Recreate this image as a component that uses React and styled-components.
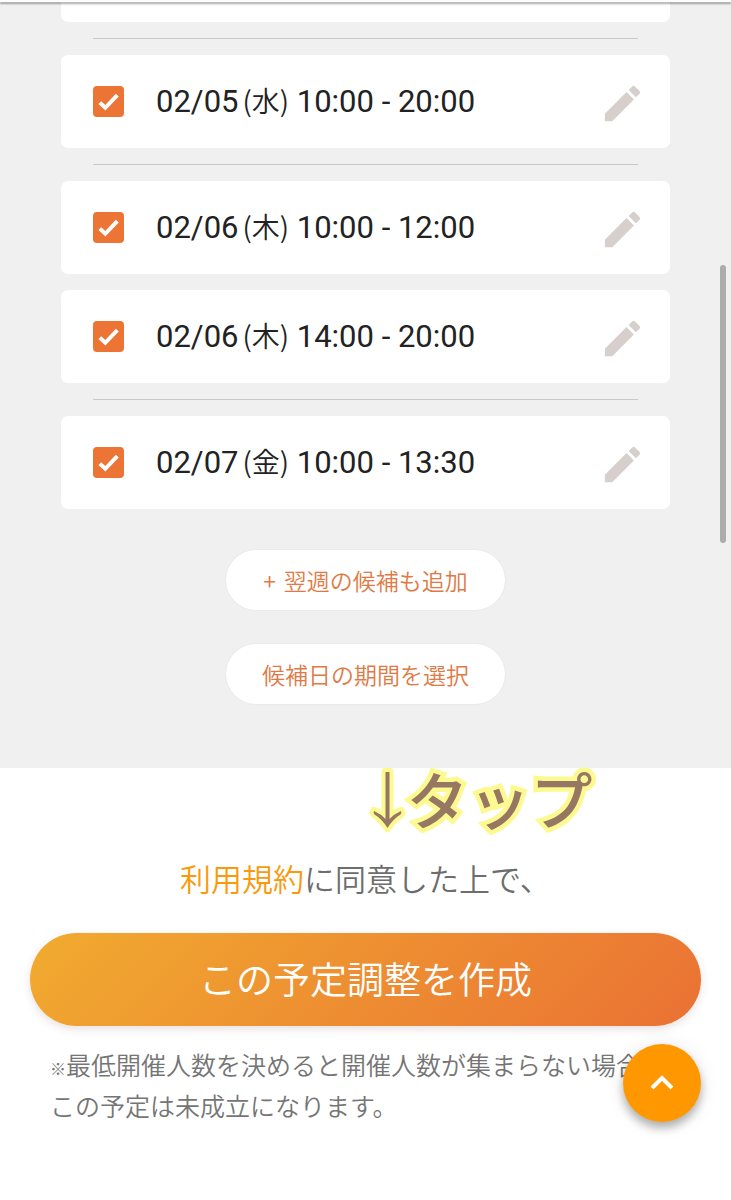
import React, { useState } from "react";
import styled, { createGlobalStyle } from "styled-components";
import { MdEdit } from "react-icons/md";

const GlobalStyle = createGlobalStyle`
  *, *::before, *::after { box-sizing: border-box; }
  body {
    margin: 0;
    background: #fff;
    color: #222;
    font-family: Roboto, "Noto Sans CJK JP", sans-serif;
  }
  button { font-family: inherit; border: 0; cursor: pointer; }
`;

const Page = styled.div`
  min-height: 100vh;
`;

const Header = styled.header`
  position: sticky;
  top: 0;
  z-index: 2;
  height: 2px;
  background: #fdfdfd;
  box-shadow: 0 2px 2px rgba(0, 0, 0, 0.36);
`;

const Candidates = styled.section`
  display: flex;
  flex-direction: column;
  align-items: center;
  gap: 41px;
  padding: 0 61px 64px;
  background: #f0f0f0;
`;

const List = styled.div`
  display: flex;
  flex-direction: column;
  gap: 16px;
  width: 100%;
`;

const CardTail = styled.div`
  height: 20px;
  border-radius: 0 0 7px 7px;
  background: #fff;
`;

const Card = styled.div`
  display: flex;
  align-items: center;
  height: 93px;
  padding: 0 24px 0 32px;
  border-radius: 7px;
  background: #fff;
`;

const Rule = styled.hr`
  height: 1px;
  margin: 0 32px;
  border: 0;
  background: #c9c9c9;
`;

const CheckLabel = styled.label`
  display: flex;
  flex: 1;
  align-items: center;
  gap: 32px;
  cursor: pointer;
`;

const CheckBox = styled.span`
  display: grid;
  width: 31px;
  height: 31px;

  & > * { grid-area: 1 / 1; }
  svg { pointer-events: none; }
  input:not(:checked) + svg { visibility: hidden; }
`;

const CheckInput = styled.input`
  appearance: none;
  width: 31px;
  height: 31px;
  margin: 0;
  border: 2px solid #ec7434;
  border-radius: 4px;
  background: #fff;

  &:checked { background: #ec7434; }
`;

const Slot = styled.span`
  font-size: 31px;
  line-height: 40px;
  white-space: nowrap;
`;

const Weekday = styled.span`
  margin: 0 0 0 4px;
  font-family: "Noto Sans CJK JP", sans-serif;
  font-size: 28px;
  font-weight: 350;
  line-height: 30px;
`;

const EditButton = styled.button`
  display: flex;
  padding: 4px 0 0;
  background: none;
  color: #d6cfcb;
`;

const PillGroup = styled.div`
  display: grid;
  gap: 34px;
`;

const Pill = styled.button`
  display: flex;
  align-items: center;
  justify-content: center;
  gap: 8px;
  height: 60px;
  padding: 0 36px;
  border-radius: 30px;
  background: #fff;
  box-shadow: 0 0 2px rgba(0, 0, 0, 0.08);
  color: #e07a45;
  font-family: "Noto Sans CJK JP", sans-serif;
  font-size: 23px;
  font-weight: 350;
`;

const Submit = styled.section`
  position: relative;
  display: flex;
  flex-direction: column;
  padding: 86px 30px 72px;
  font-family: "Noto Sans CJK JP", sans-serif;
  font-weight: 350;
`;

const TapHint = styled.div`
  position: absolute;
  top: -6px;
  left: calc(50% + 3px);
  display: flex;
  align-items: center;
  color: #957762;
  font-size: 62px;
  font-weight: 500;
  line-height: 72px;
  -webkit-text-stroke: 9px #fdf991;
  paint-order: stroke fill;
  pointer-events: none;
`;

const Terms = styled.p`
  margin: 0 0 31px;
  color: #6d6d6d;
  font-size: 31px;
  line-height: 48px;
  text-align: center;

  a { color: #f89a0c; text-decoration: none; }
`;

const CreateButton = styled.button`
  height: 93px;
  padding: 0 0 4px;
  border-radius: 47px;
  background: linear-gradient(135deg, #f1ab2f 0%, #ea7134 100%);
  box-shadow: 0 3px 8px rgba(120, 60, 60, 0.16);
  color: #fff;
  font-size: 37px;
  font-weight: 350;
`;

const Note = styled.p`
  margin: 18px 0 0;
  padding-left: 20px;
  color: #757575;
  font-size: 25px;
  line-height: 41px;
  white-space: nowrap;
  overflow: hidden;

  small { font-size: 16px; line-height: 16px; }
`;

const TopButton = styled.button`
  position: fixed;
  right: 30px;
  bottom: 78px;
  z-index: 3;
  display: grid;
  place-items: center;
  width: 78px;
  height: 78px;
  padding: 0;
  border-radius: 50%;
  background: #ff9800;
  box-shadow: 0 6px 10px rgba(0, 0, 0, 0.28), 0 2px 20px rgba(0, 0, 0, 0.1);
`;

const ScrollThumb = styled.div`
  position: fixed;
  top: 265px;
  right: 5px;
  width: 6px;
  height: 278px;
  border-radius: 3px;
  background: #acacac;
`;

const days = [
  [{ date: "02/05", day: "水", time: "10:00 - 20:00" }],
  [
    { date: "02/06", day: "木", time: "10:00 - 12:00" },
    { date: "02/06", day: "木", time: "14:00 - 20:00" },
  ],
  [{ date: "02/07", day: "金", time: "10:00 - 13:30" }],
];

function Candidate({ date, day, time }) {
  const [checked, setChecked] = useState(true);
  return (
    <Card>
      <CheckLabel>
        <CheckBox>
          <CheckInput
            type="checkbox"
            checked={checked}
            onChange={(e) => setChecked(e.target.checked)}
          />
          <svg width="31" height="31" viewBox="0 0 31 31" fill="none" aria-hidden="true">
            <path d="M6.8 16.6 L12.3 21.8 L24.3 9.2" stroke="#fff" strokeWidth="4" />
          </svg>
        </CheckBox>
        <Slot>
          {date}
          <Weekday>({day})</Weekday> {time}
        </Slot>
      </CheckLabel>
      <EditButton type="button" aria-label="編集">
        <MdEdit size={47} />
      </EditButton>
    </Card>
  );
}

export default function App() {
  return (
    <Page>
      <GlobalStyle />
      <Header />
      <main>
        <Candidates>
          <List>
            <CardTail />
            {days.map((slots, i) => (
              <React.Fragment key={i}>
                <Rule />
                {slots.map((slot) => (
                  <Candidate key={slot.time} {...slot} />
                ))}
              </React.Fragment>
            ))}
          </List>
          <PillGroup>
            <Pill type="button">
              <span>+</span>
              <span>翌週の候補も追加</span>
            </Pill>
            <Pill type="button">候補日の期間を選択</Pill>
          </PillGroup>
        </Candidates>
        <Submit>
          <TapHint>
            <svg width="38" height="72" viewBox="0 0 38 72" aria-hidden="true">
              <path
                d="M16.5 10 H20.5 V57 Q25 52 32 49 Q33 51 31.500 52.500 Q24 57 18.500 66 Q13 57 5.500 52.500 Q4 51 5 49 Q12 52 16.500 57 Z"
                fill="#957762"
                stroke="#fdf991"
                strokeWidth="8"
                strokeLinejoin="round"
                paintOrder="stroke"
              />
            </svg>
            タップ
          </TapHint>
          <Terms>
            <a href="#terms">利用規約</a>に同意した上で、
          </Terms>
          <CreateButton type="button">この予定調整を作成</CreateButton>
          <Note>
            <small>※</small>最低開催人数を決めると開催人数が集まらない場合、
            <br />
            この予定は未成立になります。
          </Note>
        </Submit>
      </main>
      <TopButton type="button" aria-label="ページの先頭へ">
        <svg width="32" height="32" viewBox="0 0 32 32" fill="none" aria-hidden="true">
          <path d="M6 21 L16 11 L26 21" stroke="#fff" strokeWidth="4" />
        </svg>
      </TopButton>
      <ScrollThumb />
    </Page>
  );
}
